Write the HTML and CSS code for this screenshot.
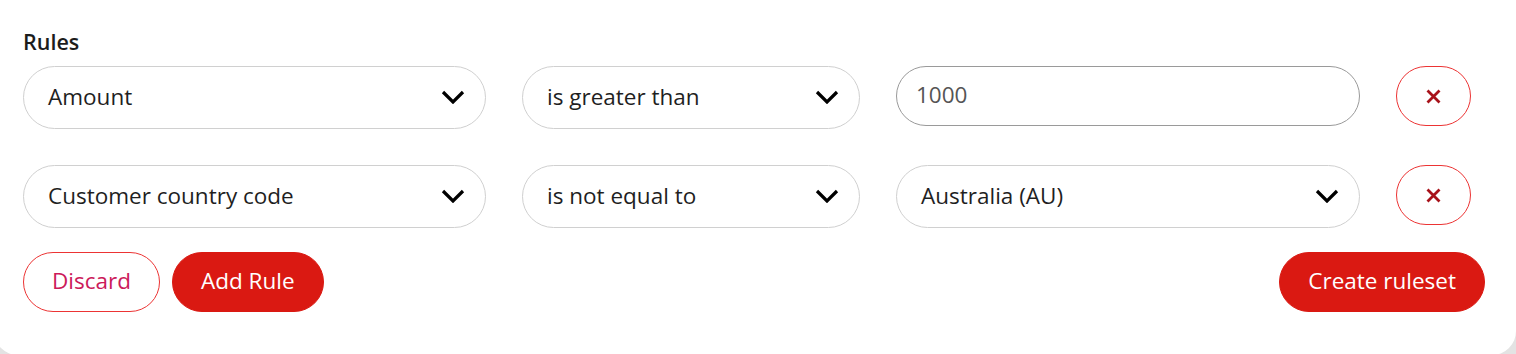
FILE: index.html
```html
<!DOCTYPE html>
<html lang="en">
<head>
<meta charset="utf-8">
<title>Rules</title>
<link rel="stylesheet" href="styles.css">
</head>
<body>
<div class="card">
  <div class="label">Rules</div>
  <div class="rules">
    <div class="rule">
      <div class="select"><span>Amount</span><svg class="chev" viewBox="0 0 24 14" width="24" height="14"><polyline points="2,2 12,12 22,2"/></svg></div>
      <div class="select"><span>is greater than</span><svg class="chev" viewBox="0 0 24 14" width="24" height="14"><polyline points="2,2 12,12 22,2"/></svg></div>
      <div class="input">1000</div>
      <button class="remove" type="button" aria-label="Remove rule"><svg viewBox="0 0 15 15" width="15" height="15"><path d="M1.5 1.5 L13.5 13.5 M13.5 1.5 L1.5 13.5"/></svg></button>
    </div>
    <div class="rule">
      <div class="select"><span>Customer country code</span><svg class="chev" viewBox="0 0 24 14" width="24" height="14"><polyline points="2,2 12,12 22,2"/></svg></div>
      <div class="select"><span>is not equal to</span><svg class="chev" viewBox="0 0 24 14" width="24" height="14"><polyline points="2,2 12,12 22,2"/></svg></div>
      <div class="select"><span>Australia (AU)</span><svg class="chev" viewBox="0 0 24 14" width="24" height="14"><polyline points="2,2 12,12 22,2"/></svg></div>
      <button class="remove" type="button" aria-label="Remove rule"><svg viewBox="0 0 15 15" width="15" height="15"><path d="M1.5 1.5 L13.5 13.5 M13.5 1.5 L1.5 13.5"/></svg></button>
    </div>
  </div>
  <div class="actions">
    <button class="btn btn-outline" type="button">Discard</button>
    <button class="btn btn-primary" type="button">Add Rule</button>
    <button class="btn btn-primary push" type="button">Create ruleset</button>
  </div>
</div>
</body>
</html>
```
FILE: styles.css
```css
html, body {
  margin: 0;
  padding: 0;
}
body {
  background: #e3e3e3;
  font-family: "Open Sans", "Noto Sans", sans-serif;
  overflow: hidden;
  height: 354px;
}
.card {
  margin-left: -6px;
  width: 1522px;
  height: 355px;
  box-sizing: border-box;
  background: #ffffff;
  border-radius: 0 0 24px 24px;
  padding: 27px 31px 0 29px;
}
.label {
  font-size: 21.5px;
  font-weight: 600;
  line-height: 30px;
  color: #1c1c1c;
  margin-bottom: 9px;
}
.rules {
  display: flex;
  flex-direction: column;
  gap: 36px;
}
.rule {
  display: grid;
  grid-template-columns: 463px 338px 464px 75px;
  column-gap: 36px;
  align-items: start;
}
.select {
  height: 63px;
  box-sizing: border-box;
  border: 1px solid #d0d0d0;
  border-radius: 32px;
  display: flex;
  align-items: center;
  justify-content: space-between;
  padding: 0 20px 2px 24px;
  font-size: 22.5px;
  line-height: 30px;
  color: #1f1f1f;
}
.chev {
  display: block;
  fill: none;
  stroke: #000;
  stroke-width: 3.2;
  margin-top: 1px;
}
.input {
  height: 60px;
  box-sizing: border-box;
  border: 1px solid #9a9a9a;
  border-radius: 30px;
  display: flex;
  align-items: center;
  padding: 0 19px 2px;
  font-size: 22.5px;
  line-height: 30px;
  color: #555555;
}
.remove {
  height: 60px;
  box-sizing: border-box;
  border: 1px solid #ec3434;
  border-radius: 30px;
  background: #fff;
  display: flex;
  align-items: center;
  justify-content: center;
  padding: 0;
  cursor: pointer;
}
.remove svg {
  display: block;
  fill: none;
  stroke: #a8121a;
  stroke-width: 2.8;
}
.actions {
  margin-top: 24px;
  display: flex;
  gap: 12px;
}
.btn {
  height: 60px;
  box-sizing: border-box;
  border-radius: 30px;
  padding: 0 28px 2px;
  font-family: "Open Sans", "Noto Sans", sans-serif;
  font-size: 22.5px;
  line-height: 30px;
  cursor: pointer;
}
.btn-outline {
  background: #fff;
  border: 1px solid #ec3434;
  color: #cc1a5a;
}
.btn-primary {
  background: #da1912;
  border: 1px solid #da1912;
  color: #ffffff;
}
.push {
  margin-left: auto;
}
```
